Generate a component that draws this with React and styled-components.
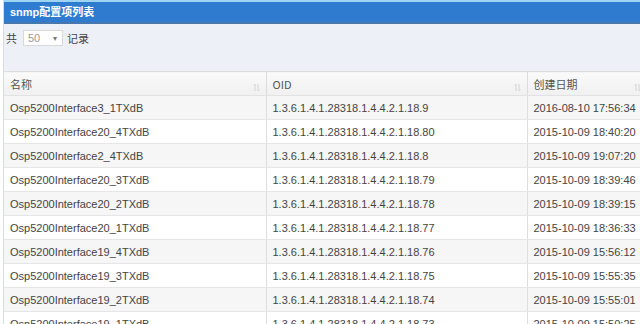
import styled, { createGlobalStyle } from "styled-components";

const GlobalStyle = createGlobalStyle`
  html, body {
    margin: 0;
    padding: 0;
    background: #fff;
    overflow: hidden;
    font-family: "Liberation Sans", Arial, "Noto Sans CJK SC", sans-serif;
  }
`;

const rows = [
  ["Osp5200Interface3_1TXdB", "1.3.6.1.4.1.28318.1.4.4.2.1.18.9", "2016-08-10 17:56:34"],
  ["Osp5200Interface20_4TXdB", "1.3.6.1.4.1.28318.1.4.4.2.1.18.80", "2015-10-09 18:40:20"],
  ["Osp5200Interface2_4TXdB", "1.3.6.1.4.1.28318.1.4.4.2.1.18.8", "2015-10-09 19:07:20"],
  ["Osp5200Interface20_3TXdB", "1.3.6.1.4.1.28318.1.4.4.2.1.18.79", "2015-10-09 18:39:46"],
  ["Osp5200Interface20_2TXdB", "1.3.6.1.4.1.28318.1.4.4.2.1.18.78", "2015-10-09 18:39:15"],
  ["Osp5200Interface20_1TXdB", "1.3.6.1.4.1.28318.1.4.4.2.1.18.77", "2015-10-09 18:36:33"],
  ["Osp5200Interface19_4TXdB", "1.3.6.1.4.1.28318.1.4.4.2.1.18.76", "2015-10-09 15:56:12"],
  ["Osp5200Interface19_3TXdB", "1.3.6.1.4.1.28318.1.4.4.2.1.18.75", "2015-10-09 15:55:35"],
  ["Osp5200Interface19_2TXdB", "1.3.6.1.4.1.28318.1.4.4.2.1.18.74", "2015-10-09 15:55:01"],
  ["Osp5200Interface19_1TXdB", "1.3.6.1.4.1.28318.1.4.4.2.1.18.73", "2015-10-09 15:50:25"],
];

const SortIcon = () => (
  <svg width="7" height="9" viewBox="0 0 7 9">
    <path d="M2 8V1L0.5 2.5M5 1v7l1.5-1.5" fill="none" stroke="#d4d4d4" strokeWidth="1" />
  </svg>
);

const App = () => (
  <>
    <GlobalStyle />
    <Panel>
      <TitleBar>snmp配置项列表</TitleBar>
      <Toolbar>
        <span>共</span>
        <Select>
          <span>50</span>
          <Arrow>▾</Arrow>
        </Select>
        <span>记录</span>
      </Toolbar>
      <Table>
        <colgroup>
          <col style={{ width: 262 }} />
          <col style={{ width: 261 }} />
          <col style={{ width: 120 }} />
        </colgroup>
        <thead>
          <tr>
            <Th>名称<SortSlot><SortIcon /></SortSlot></Th>
            <Th>OID<SortSlot><SortIcon /></SortSlot></Th>
            <Th>创建日期<SortSlot><SortIcon /></SortSlot></Th>
          </tr>
        </thead>
        <tbody>
          {rows.map((r, i) => (
            <Row key={r[0]} $odd={i % 2 === 0}>
              <Td>{r[0]}</Td>
              <Td>{r[1]}</Td>
              <Td>{r[2]}</Td>
            </Row>
          ))}
        </tbody>
      </Table>
    </Panel>
  </>
);

export default App;

const Panel = styled.div`
  margin-left: 3px;
  width: 700px;
  height: 324px;
  background: #eef0f8;
  border-left: 1px solid #d6dbe6;
`;

const TitleBar = styled.div`
  height: 20px;
  line-height: 20px;
  padding-left: 6px;
  background: #2f7bcf;
  border-top: 2px solid #9fd3f3;
  border-bottom: 2px solid #4877ad;
  color: #fff;
  font-size: 11px;
  font-weight: bold;
  font-family: "Liberation Sans", "Noto Sans CJK SC", sans-serif;
`;

const Toolbar = styled.div`
  display: flex;
  align-items: center;
  height: 16px;
  margin-top: 6px;
  padding-left: 2px;
  font-size: 11px;
  color: #444;
  font-family: "Noto Sans CJK SC", sans-serif;
`;

const Select = styled.div`
  display: flex;
  align-items: center;
  justify-content: space-between;
  box-sizing: border-box;
  width: 40px;
  height: 16px;
  margin: 0 4px 0 6px;
  padding: 0 5px 0 4px;
  background: #fff;
  border: 1px solid #d8d8d8;
  color: #999;
  font-family: "Liberation Sans", sans-serif;
  font-size: 11px;
`;

const Arrow = styled.span`
  font-size: 8px;
  color: #777;
`;

const Table = styled.table`
  margin-top: 25px;
  border-collapse: collapse;
  table-layout: fixed;
  font-size: 11px;
  color: #444;
`;

const Th = styled.th`
  position: relative;
  height: 23px;
  padding: 0 6px;
  text-align: left;
  font-weight: normal;
  color: #555;
  font-family: "Noto Sans CJK SC", sans-serif;
  background: linear-gradient(#fafafa, #f0f0f0);
  border-top: 1px solid #dcdcdc;
  border-bottom: 1px solid #e2e2e2;
  border-right: 1px solid #dcdcdc;
`;

const SortSlot = styled.span`
  position: absolute;
  right: 6px;
  top: 7px;
`;

const Row = styled.tr`
  background: ${(p) => (p.$odd ? "#f6f6f6" : "#fff")};
`;

const Td = styled.td`
  height: 23px;
  padding: 0 6px;
  white-space: nowrap;
  overflow: hidden;
  border-bottom: 1px solid #e6e6e6;
  border-right: 1px solid #dedede;
`;
